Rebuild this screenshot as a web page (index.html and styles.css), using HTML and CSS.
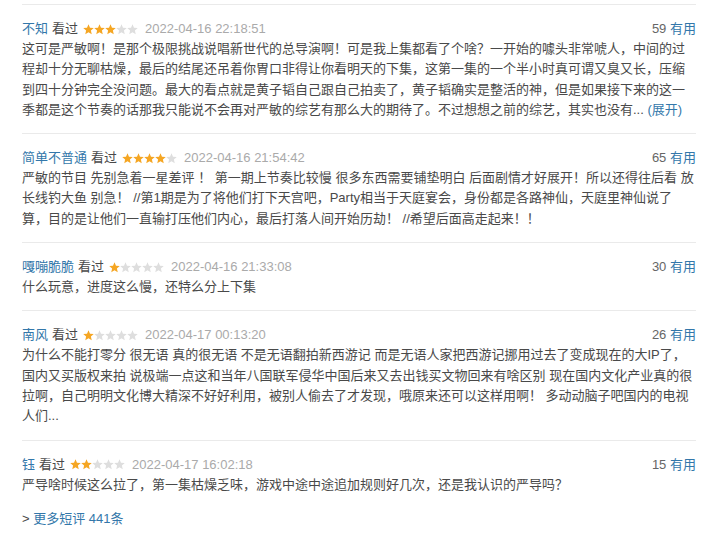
FILE: index.html
```html
<!DOCTYPE html>
<html lang="zh-CN">
<head>
    <meta charset="UTF-8">
    <title>短评</title>
    <link rel="stylesheet" href="styles.css">
</head>
<body>
    <svg width="0" height="0" class="defs">
        <defs>
            <symbol id="star" viewBox="0 0 20 20">
                <polygon points="10,0.5 12.7,6.78 19.51,7.41 14.37,11.92 15.88,18.59 10,15.1 4.12,18.59 5.63,11.92 0.49,7.41 7.3,6.78"/>
            </symbol>
        </defs>
    </svg>

    <div class="comments">
        <div class="comment-item">
            <div class="comment-head">
                <span class="comment-info">
                    <a class="user">不知</a> <span class="seen">看过</span>
                    <span class="rating" data-score="3">
                        <svg class="on"><use href="#star"/></svg><svg class="on"><use href="#star"/></svg><svg class="on"><use href="#star"/></svg><svg><use href="#star"/></svg><svg><use href="#star"/></svg>
                    </span>
                    <span class="comment-time">2022-04-16 22:18:51</span>
                </span>
                <span class="votes"><span class="vote-count">59</span> <a class="vote">有用</a></span>
            </div>
            <p class="short">这可是严敏啊！是那个极限挑战说唱新世代的总导演啊！可是我上集都看了个啥？一开始的噱头非常唬人，中间的过程却十分无聊枯燥，最后的结尾还吊着你胃口非得让你看明天的下集，这第一集的一个半小时真可谓又臭又长，压缩到四十分钟完全没问题。最大的看点就是黄子韬自己跟自己拍卖了，黄子韬确实是整活的神，但是如果接下来的这一季都是这个节奏的话那我只能说不会再对严敏的综艺有那么大的期待了。不过想想之前的综艺，其实也没有... <a class="unfold">(展开)</a></p>
        </div>

        <div class="comment-item">
            <div class="comment-head">
                <span class="comment-info">
                    <a class="user">简单不普通</a> <span class="seen">看过</span>
                    <span class="rating" data-score="4">
                        <svg class="on"><use href="#star"/></svg><svg class="on"><use href="#star"/></svg><svg class="on"><use href="#star"/></svg><svg class="on"><use href="#star"/></svg><svg><use href="#star"/></svg>
                    </span>
                    <span class="comment-time">2022-04-16 21:54:42</span>
                </span>
                <span class="votes"><span class="vote-count">65</span> <a class="vote">有用</a></span>
            </div>
            <p class="short">严敏的节目 先别急着一星差评 ！ 第一期上节奏比较慢 很多东西需要铺垫明白 后面剧情才好展开！所以还得往后看 放长线钓大鱼 别急！ //第1期是为了将他们打下天宫吧，Party相当于天庭宴会，身份都是各路神仙，天庭里神仙说了算，目的是让他们一直输打压他们内心，最后打落人间开始历劫！ //希望后面高走起来！！</p>
        </div>

        <div class="comment-item">
            <div class="comment-head">
                <span class="comment-info">
                    <a class="user">嘎嘣脆脆</a> <span class="seen">看过</span>
                    <span class="rating" data-score="1">
                        <svg class="on"><use href="#star"/></svg><svg><use href="#star"/></svg><svg><use href="#star"/></svg><svg><use href="#star"/></svg><svg><use href="#star"/></svg>
                    </span>
                    <span class="comment-time">2022-04-16 21:33:08</span>
                </span>
                <span class="votes"><span class="vote-count">30</span> <a class="vote">有用</a></span>
            </div>
            <p class="short">什么玩意，进度这么慢，还特么分上下集</p>
        </div>

        <div class="comment-item">
            <div class="comment-head">
                <span class="comment-info">
                    <a class="user">南风</a> <span class="seen">看过</span>
                    <span class="rating" data-score="1">
                        <svg class="on"><use href="#star"/></svg><svg><use href="#star"/></svg><svg><use href="#star"/></svg><svg><use href="#star"/></svg><svg><use href="#star"/></svg>
                    </span>
                    <span class="comment-time">2022-04-17 00:13:20</span>
                </span>
                <span class="votes"><span class="vote-count">26</span> <a class="vote">有用</a></span>
            </div>
            <p class="short">为什么不能打零分 很无语 真的很无语 不是无语翻拍新西游记 而是无语人家把西游记挪用过去了变成现在的大IP了，国内又买版权来拍 说极端一点这和当年八国联军侵华中国后来又去出钱买文物回来有啥区别 现在国内文化产业真的很拉啊，自己明明文化博大精深不好好利用，被别人偷去了才发现，哦原来还可以这样用啊！ 多动动脑子吧国内的电视人们...</p>
        </div>

        <div class="comment-item">
            <div class="comment-head">
                <span class="comment-info">
                    <a class="user">钰</a> <span class="seen">看过</span>
                    <span class="rating" data-score="2">
                        <svg class="on"><use href="#star"/></svg><svg class="on"><use href="#star"/></svg><svg><use href="#star"/></svg><svg><use href="#star"/></svg><svg><use href="#star"/></svg>
                    </span>
                    <span class="comment-time">2022-04-17 16:02:18</span>
                </span>
                <span class="votes"><span class="vote-count">15</span> <a class="vote">有用</a></span>
            </div>
            <p class="short">严导啥时候这么拉了，第一集枯燥乏味，游戏中途中途追加规则好几次，还是我认识的严导吗？</p>
        </div>

        <p class="more">&gt; <a>更多短评 441条</a></p>
    </div>
</body>
</html>
```

FILE: styles.css
```css
body {
    margin: 0;
    background-color: #fff;
    font-family: "Liberation Sans", Arial, "Noto Sans CJK SC", sans-serif;
    font-size: 13px;
    color: #494949;
}
.defs {
    position: absolute;
}
a {
    color: #37a;
    text-decoration: none;
    cursor: pointer;
}
.comments {
    width: 674px;
    padding: 4px 0 0 22px;
}
.comment-item {
    border-top: 1px solid #eaeaea;
    padding: 14px 0 13px;
}
.comment-head {
    display: flex;
    justify-content: space-between;
    line-height: 20px;
}
.comment-info {
    display: flex;
    align-items: center;
}
.seen {
    margin-left: 4px;
    color: #494949;
}
.rating {
    display: flex;
    margin-left: 5px;
}
.rating svg {
    width: 11px;
    height: 11px;
    fill: #dedede;
}
.rating svg.on {
    fill: #f5a623;
}
.comment-time {
    margin-left: 7px;
    color: #aaa;
}
.vote-count {
    color: #666;
}
.short {
    margin: 0;
    line-height: 20.3px;
}
.more {
    margin: 0;
    line-height: 20px;
    padding-top: 1px;
}
```
